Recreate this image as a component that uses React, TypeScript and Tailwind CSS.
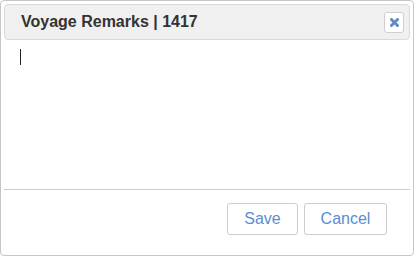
import React, { useState } from 'react';

const CloseIcon: React.FC = () => (
  <svg width="9" height="9" viewBox="0 0 9 9" aria-hidden="true">
    <path d="M1.5 1.5 L7.5 7.5 M7.5 1.5 L1.5 7.5" stroke="#5b89c9" strokeWidth="2.8" strokeLinecap="square" />
  </svg>
);

const App: React.FC = () => {
  const [remarks, setRemarks] = useState('');

  return (
    <div
      className="w-[414px] h-[256px] bg-white border border-[#c6c6c6] rounded-[4px] p-[3px] flex flex-col"
      style={{ fontFamily: '"Liberation Sans", Arial, sans-serif' }}
    >
      {/* header */}
      <div className="h-[36px] shrink-0 bg-[#f0f0f0] border border-[#d9d9d9] rounded-[4px] flex items-center justify-between pl-[16px] pr-[5px]">
        <h3 className="text-[16px] font-bold text-[#333333] leading-none">Voyage Remarks | 1417</h3>
        <button className="w-[20px] h-[21px] bg-white border border-[#cfcfcf] rounded-[3px] flex items-center justify-center">
          <CloseIcon />
        </button>
      </div>

      {/* body */}
      <div className="relative h-[149px] shrink-0">
        <textarea
          value={remarks}
          onChange={(e) => setRemarks(e.target.value)}
          className="w-full h-full resize-none outline-none px-[16px] pt-[8px] text-[14px] text-[#333333] caret-transparent"
        />
        {remarks === '' && <div className="absolute left-[16px] top-[9px] w-[1px] h-[16px] bg-[#222222]" />}
      </div>

      {/* footer */}
      <div className="border-t border-[#cccccc] flex-1 flex justify-end items-start gap-[6px] pt-[13px] pr-[23px]">
        <button className="w-[71px] h-[32px] bg-white border border-[#cccccc] rounded-[3px] text-[16px] text-[#5b8dcf]">
          Save
        </button>
        <button className="w-[83px] h-[32px] bg-white border border-[#cccccc] rounded-[3px] text-[16px] text-[#5b8dcf]">
          Cancel
        </button>
      </div>
    </div>
  );
};

export default App;
